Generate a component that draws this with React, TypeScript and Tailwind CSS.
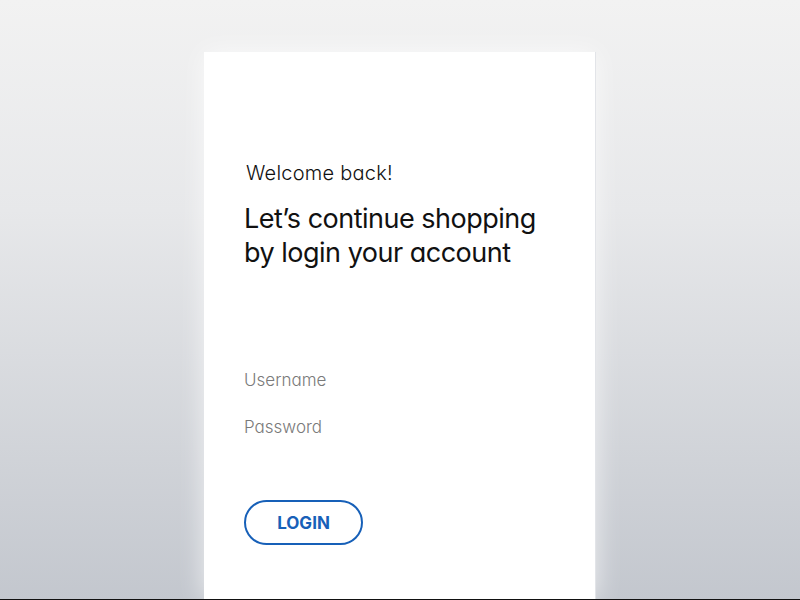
import React from "react";

export default function App() {
  return (
    <div
      className="w-[800px] h-[600px] flex flex-col overflow-hidden bg-[linear-gradient(180deg,#f2f2f2_0%,#e7e8ea_35%,#c3c7ce_100%)] [font-feature-settings:'cv11','ss01']"
      style={{ fontFamily: "Inter, 'Open Sans', sans-serif" }}
    >
      <div className="flex-1 flex pl-[204px] pt-[52px]">
        <div className="w-[392px] bg-white shadow-[0_0_24px_rgba(255,255,255,0.7)] border-r border-[#e2e4e8] pl-[40px] flex flex-col">
          <div className="pt-[109px] pl-[2px] text-[20px] leading-[25px] text-[#111] font-light tracking-[0.25px]">
            Welcome back!
          </div>
          <div className="mt-[16px] text-[27px] leading-[34px] text-[#111] tracking-[-0.5px]">
            Let’s continue shopping
            <br />
            by login your account
          </div>
          <div className="mt-[98px] text-[17px] leading-[24px] text-[#7a7a7a] font-light">Username</div>
          <div className="mt-[23px] text-[17px] leading-[24px] text-[#7a7a7a] font-light">Password</div>
          <button className="mt-[61px] w-[119px] h-[45px] pt-[2px] rounded-full border-2 border-[#1760b8] text-[#1760b8] font-bold text-[17px] flex items-center justify-center">
            LOGIN
          </button>
        </div>
      </div>
      <div className="h-[1px] bg-[#111]" />
    </div>
  );
}
